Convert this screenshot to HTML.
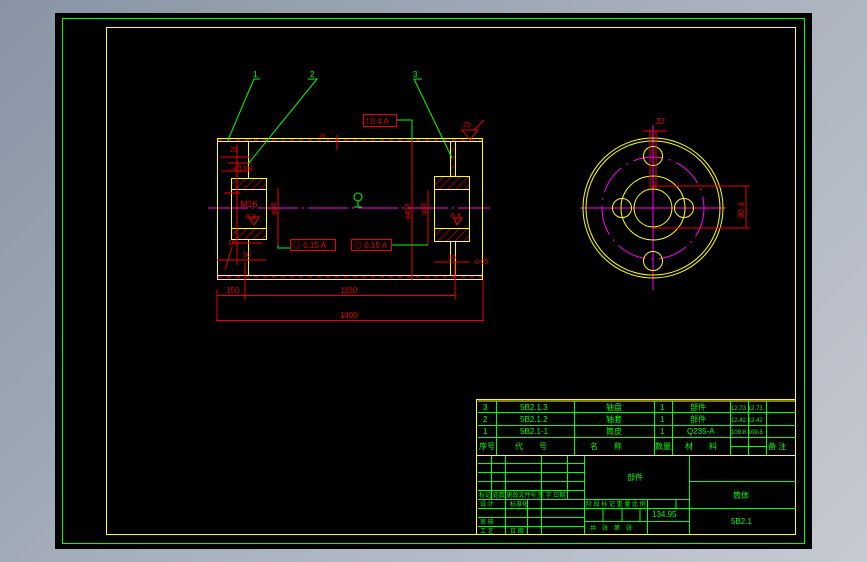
<!DOCTYPE html>
<html><head><meta charset="utf-8"><style>
html,body{margin:0;padding:0;width:867px;height:562px;overflow:hidden;background:linear-gradient(135deg,#8894a4 0%,#a8b0bc 50%,#c6cad2 100%);}
svg{position:absolute;left:0;top:0}
text{font-family:"Liberation Sans","Noto Sans CJK SC",sans-serif;}
</style></head><body>
<svg width="867" height="562" viewBox="0 0 867 562">
<defs>
<pattern id="h" width="6" height="6" patternUnits="userSpaceOnUse" patternTransform="rotate(45)">
<line x1="0" y1="0" x2="0" y2="6" stroke="#e00" stroke-width="1.2"/></pattern>
</defs>
<rect x="55" y="13" width="757" height="536" fill="#000"/>
<rect x="62.5" y="18.5" width="742" height="525" fill="none" stroke="#0f0" stroke-width="1"/>
<rect x="106.5" y="27.5" width="689" height="507" fill="none" stroke="#ff0" stroke-width="1"/>

<!-- centerline -->
<line x1="208" y1="208" x2="490" y2="208" stroke="#f0f" stroke-dasharray="40 4 2 4"/>
<!-- shell -->
<g fill="none" stroke="#ff0">
<rect x="217.5" y="138.5" width="265" height="141"/>
<line x1="217" y1="141.5" x2="483" y2="141.5"/>
<line x1="217" y1="275.5" x2="483" y2="275.5"/>
<path d="M248.5 141 V178 M248.5 240 V275"/>
<path d="M450.5 141 V176 M455.5 141 V176 M450.5 242 V275 M455.5 242 V275"/>
<rect x="231.5" y="178.5" width="35" height="11" fill="url(#h)"/>
<rect x="231.5" y="228.5" width="35" height="11" fill="url(#h)"/>
<path d="M231.5 189 V228 M266.5 189 V228"/>
<rect x="434.5" y="176.5" width="35" height="13" fill="url(#h)"/>
<rect x="434.5" y="228.5" width="35" height="13" fill="url(#h)"/>
<path d="M434.5 189 V228 M469.5 189 V228"/>
</g>
<line x1="218" y1="140" x2="482" y2="140" stroke="#e00" stroke-dasharray="4 5"/>
<line x1="218" y1="277" x2="482" y2="277" stroke="#e00" stroke-dasharray="4 5"/>
<rect x="451" y="142" width="4" height="34" fill="url(#h)"/>
<!-- red dims -->
<g stroke="#e00" fill="none">
<path d="M217 290 V322 M245 262 V300 M455 262 V300 M483 280 V322"/>
<path d="M217 295.5 H455 M217 320.5 H483"/>
<path d="M412 139 V280 M278 188 V245 M428 190 V245"/>
<path d="M221 157 H250 M228 163 H252 M222 171 H250 M224 193 H240 M232 243 H262 M217 260 H266 M434 262 H470"/>
<path d="M237 145 V265 M232 247 L225 270"/>
<path d="M337 135 V150"/>
<rect x="363.5" y="114.5" width="33" height="12"/>
<rect x="290.5" y="239.5" width="45" height="11"/>
<rect x="351.5" y="239.5" width="40" height="11"/>
<path d="M462 130 L470 140 L478 130 Z M474 130 L484 120"/>
<path d="M249 217 L254 225 L259 217 Z M454 218 L457 225 L462 218 Z"/>
</g>
<g fill="#e00" font-size="8">
<text x="226" y="293">150</text><text x="340" y="293">1100</text><text x="340" y="318">1400</text>
<text x="366" y="124">f 0.4 A</text>
<text x="293" y="248">◎ 0.15 A</text><text x="354" y="248">◎ 0.15 A</text>
<text x="240" y="207" font-size="9">M16</text>
<text x="233" y="170" font-size="6">4孔 M4</text>
<text x="230" y="152" font-size="7">25</text>
<text x="246" y="219" font-size="7">6.3</text>
<text x="451" y="218" font-size="7">6.3</text>
<text x="463" y="127" font-size="7">25</text>
<text x="475" y="264" font-size="7">0.05</text>
<text x="228" y="245" font-size="7">15</text>
<text x="243" y="257" font-size="7">30</text>
<text x="448" y="260" font-size="7">30</text>
<text x="319" y="138" font-size="6">25</text>
<text transform="translate(410 220) rotate(-90)" font-size="7">φ400</text>
<text transform="translate(276 215) rotate(-90)" font-size="7">φ85</text>
<text transform="translate(426 215) rotate(-90)" font-size="7">φ85</text>
</g>
<!-- green -->
<g stroke="#0f0" fill="none">
<path d="M228 140 L254 79 H260 M248 164 L317 79 H308 M452 158 L414 79 H422"/>
<path d="M278 245 V248 H290 M392 245 H428 M397 120 H412 V140"/>
<circle cx="358" cy="197" r="4"/><path d="M358 201 V207 M354 207 H362"/>
</g>
<g fill="#0f0" font-size="8"><text x="253" y="77">1</text><text x="310" y="77">2</text><text x="413" y="77">3</text></g>

<!-- end view -->
<g fill="none">
<line x1="580" y1="208" x2="726" y2="208" stroke="#f0f"/>
<line x1="653" y1="125" x2="653" y2="290" stroke="#f0f"/>
<circle cx="653" cy="208" r="51" stroke="#f0f" stroke-dasharray="30 6 2 6"/>
<circle cx="653" cy="208" r="70" stroke="#ff0"/>
<circle cx="653" cy="208" r="67" stroke="#ff0"/>
<circle cx="653" cy="208" r="32" stroke="#ff0"/>
<circle cx="653" cy="208" r="19" stroke="#ff0"/>
<circle cx="622" cy="208" r="9.5" stroke="#ff0"/>
<circle cx="684" cy="208" r="9.5" stroke="#ff0"/>
<circle cx="653" cy="156" r="9.5" stroke="#ff0"/>
<circle cx="653" cy="261" r="9.5" stroke="#ff0"/>
<path d="M650 130 V187 M656 130 V187 M650 187 H656" stroke="#e00"/>
<path d="M643 131 H667 M653 186 H750 M653 228 H750 M746 186 V228" stroke="#e00"/>
</g>
<g fill="#e00" font-size="8"><text x="656" y="124">22</text><text transform="translate(744 218) rotate(-90)">90.4</text></g>

<!-- title block -->
<g fill="none" stroke="#ff0">
<rect x="476.5" y="399.5" width="319" height="135"/>
<line x1="476" y1="455.5" x2="796" y2="455.5"/>
<path d="M478 401 H796"/>
</g>
<g stroke="#0f0" fill="none">
<path d="M478 412.5 H796 M478 425.5 H796 M478 437.5 H796"/>
<path d="M496.5 401 V455 M574.5 401 V455 M654.5 401 V455 M672.5 401 V455 M730.5 401 V455 M748.5 401 V455 M766.5 401 V455 M730 446.5 H766"/>
<path d="M491.5 456 V499 M505.5 456 V534 M541.5 456 V534 M567.5 456 V499 M584.5 456 V534 M689.5 456 V534"/>
<path d="M478 463.5 H584 M478 472.5 H584 M478 481.5 H584 M478 490.5 H584 M478 499.5 H689 M478 508.5 H689 M478 517.5 H584 M478 526.5 H584 M584 521.5 H689 M689 481.5 H796 M689 508.5 H796"/>
<path d="M527.5 499 V534 M603 508 V521 M622 508 V521 M640 508 V521 M647.5 499 V534 M676 499 V508"/>
</g>
<g fill="#0f0" font-size="8">
<text x="483" y="410">3</text><text x="520" y="410">5B2.1.3</text><text x="606" y="410">轴盘</text><text x="660" y="410">1</text><text x="690" y="410">部件</text><text x="731" y="410" font-size="6">12.73 12.73</text>
<text x="483" y="422">2</text><text x="520" y="422">5B2.1.2</text><text x="606" y="422">轴套</text><text x="660" y="422">1</text><text x="690" y="422">部件</text><text x="731" y="422" font-size="6">12.42 12.42</text>
<text x="483" y="434">1</text><text x="520" y="434">5B2.1-1</text><text x="606" y="434">筒皮</text><text x="660" y="434">1</text><text x="687" y="434">Q235-A</text><text x="731" y="434" font-size="6">109.8 109.8</text>
<text x="479" y="449">序号</text><text x="515" y="449">代　　号</text><text x="590" y="449">名　　称</text><text x="655" y="449">数量</text><text x="685" y="449">材　　料</text><text x="768" y="449">备 注</text>
<text x="627" y="480">部件</text><text x="733" y="498">筒体</text><text x="731" y="524">5B2.1</text><text x="652" y="517">134.95</text>
<text x="479" y="497" font-size="6">标记 处数 更改文件号 签 字 日期</text>
<text x="480" y="506" font-size="6">设 计</text><text x="510" y="506" font-size="6">标准化</text>
<text x="480" y="524" font-size="6">审 核</text><text x="480" y="533" font-size="6">工 艺</text><text x="510" y="533" font-size="6">日 期</text>
<text x="586" y="506" font-size="6">阶 段 标 记 重 量 比 例</text>
<text x="590" y="530" font-size="6">共　张　第　张</text>
</g>
</svg>
</body></html>
